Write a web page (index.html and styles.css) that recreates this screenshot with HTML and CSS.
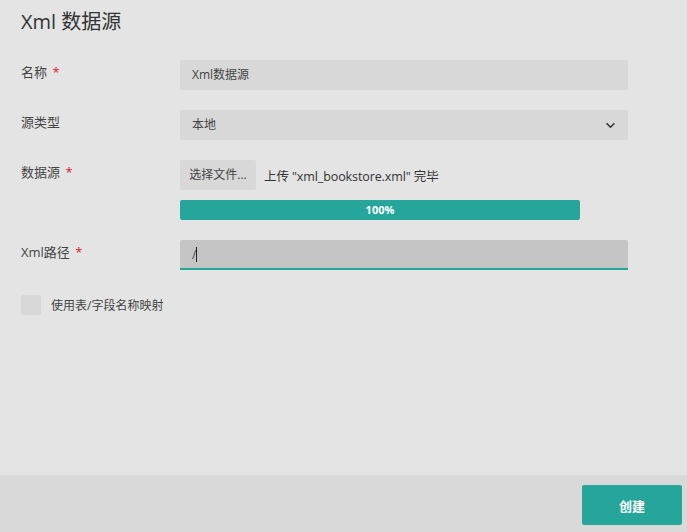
FILE: index.html
```html
<!DOCTYPE html>
<html lang="zh-CN">
<head>
    <meta charset="UTF-8">
    <title>Xml 数据源</title>
    <link rel="stylesheet" href="styles.css">
</head>
<body>
    <div class="dialog">
        <div class="content">
            <h2 class="title">Xml 数据源</h2>

            <div class="form">
                <div class="label">名称 <span class="req">*</span></div>
                <div class="field">
                    <div class="input">Xml数据源</div>
                </div>

                <div class="label">源类型</div>
                <div class="field">
                    <div class="input select">
                        <span>本地</span>
                        <svg class="chevron" viewBox="0 0 12 8" width="11" height="7">
                            <path d="M1.5 1.5 L6 6 L10.5 1.5" fill="none" stroke="#333" stroke-width="1.8" />
                        </svg>
                    </div>
                </div>

                <div class="label">数据源 <span class="req">*</span></div>
                <div class="field">
                    <div class="file-line">
                        <div class="file-btn">选择文件...</div>
                        <span class="file-status">上传 "xml_bookstore.xml" 完毕</span>
                    </div>
                    <div class="progress">100%</div>
                </div>

                <div class="label">Xml路径 <span class="req">*</span></div>
                <div class="field">
                    <div class="input active">/<span class="caret"></span></div>
                </div>
            </div>

            <div class="check-row">
                <div class="checkbox"></div>
                <span>使用表/字段名称映射</span>
            </div>
        </div>

        <div class="footer">
            <button class="create">创建</button>
        </div>
    </div>
</body>
</html>
```

FILE: styles.css
```css
body {
    margin: 0;
    background: #e4e4e4;
    font-family: "Open Sans", "Noto Sans CJK SC", sans-serif;
    color: #333;
}
.dialog {
    width: 687px;
    height: 532px;
    display: flex;
    flex-direction: column;
}
.content {
    flex: 1;
    padding: 0 21px;
}
.title {
    margin: 0;
    padding-top: 7px;
    height: 60px;
    box-sizing: border-box;
    font-size: 20px;
    font-weight: normal;
    line-height: 30px;
    color: #333;
}
.form {
    display: grid;
    grid-template-columns: 159px 448px;
    row-gap: 20px;
}
.label {
    font-size: 13px;
    line-height: 24px;
    color: #444;
}
.req {
    color: #e81123;
    margin-left: 2px;
}
.input {
    height: 30px;
    background: #d8d8d8;
    border-radius: 2px;
    padding: 0 12px;
    font-size: 12px;
    line-height: 30px;
    color: #444;
}
.select {
    display: flex;
    align-items: center;
    justify-content: space-between;
}
.active {
    background: #c5c5c5;
    border-bottom: 2px solid #26a69a;
    border-radius: 2px 2px 0 0;
    height: 28px;
    line-height: 30px;
}
.caret {
    display: inline-block;
    width: 1px;
    height: 15px;
    background: #222;
    vertical-align: -3px;
}
.file-line {
    display: flex;
    align-items: center;
    gap: 8px;
}
.file-btn {
    width: 76px;
    height: 30px;
    box-sizing: border-box;
    background: #d8d8d8;
    border-radius: 2px;
    font-size: 12px;
    line-height: 30px;
    text-align: center;
    color: #444;
}
.file-status {
    font-size: 12.5px;
    color: #333;
    letter-spacing: -0.1px;
}
.progress {
    margin-top: 10px;
    width: 400px;
    height: 20px;
    background: #26a69a;
    border-radius: 2px;
    color: #fff;
    font-size: 11px;
    font-weight: bold;
    line-height: 20px;
    text-align: center;
}
.check-row {
    display: flex;
    align-items: center;
    gap: 10px;
    margin-top: 25px;
    font-size: 12px;
    color: #444;
}
.checkbox {
    width: 20px;
    height: 20px;
    background: #d8d8d8;
    border-radius: 2px;
}
.footer {
    height: 57px;
    background: #d9d9d9;
    display: flex;
    justify-content: flex-end;
    padding: 10px 5px 7px;
    box-sizing: border-box;
}
.create {
    width: 100px;
    height: 40px;
    background: #26a69a;
    color: #fff;
    border: none;
    border-radius: 2px;
    font-family: inherit;
    font-size: 13px;
    font-weight: bold;
}
```
